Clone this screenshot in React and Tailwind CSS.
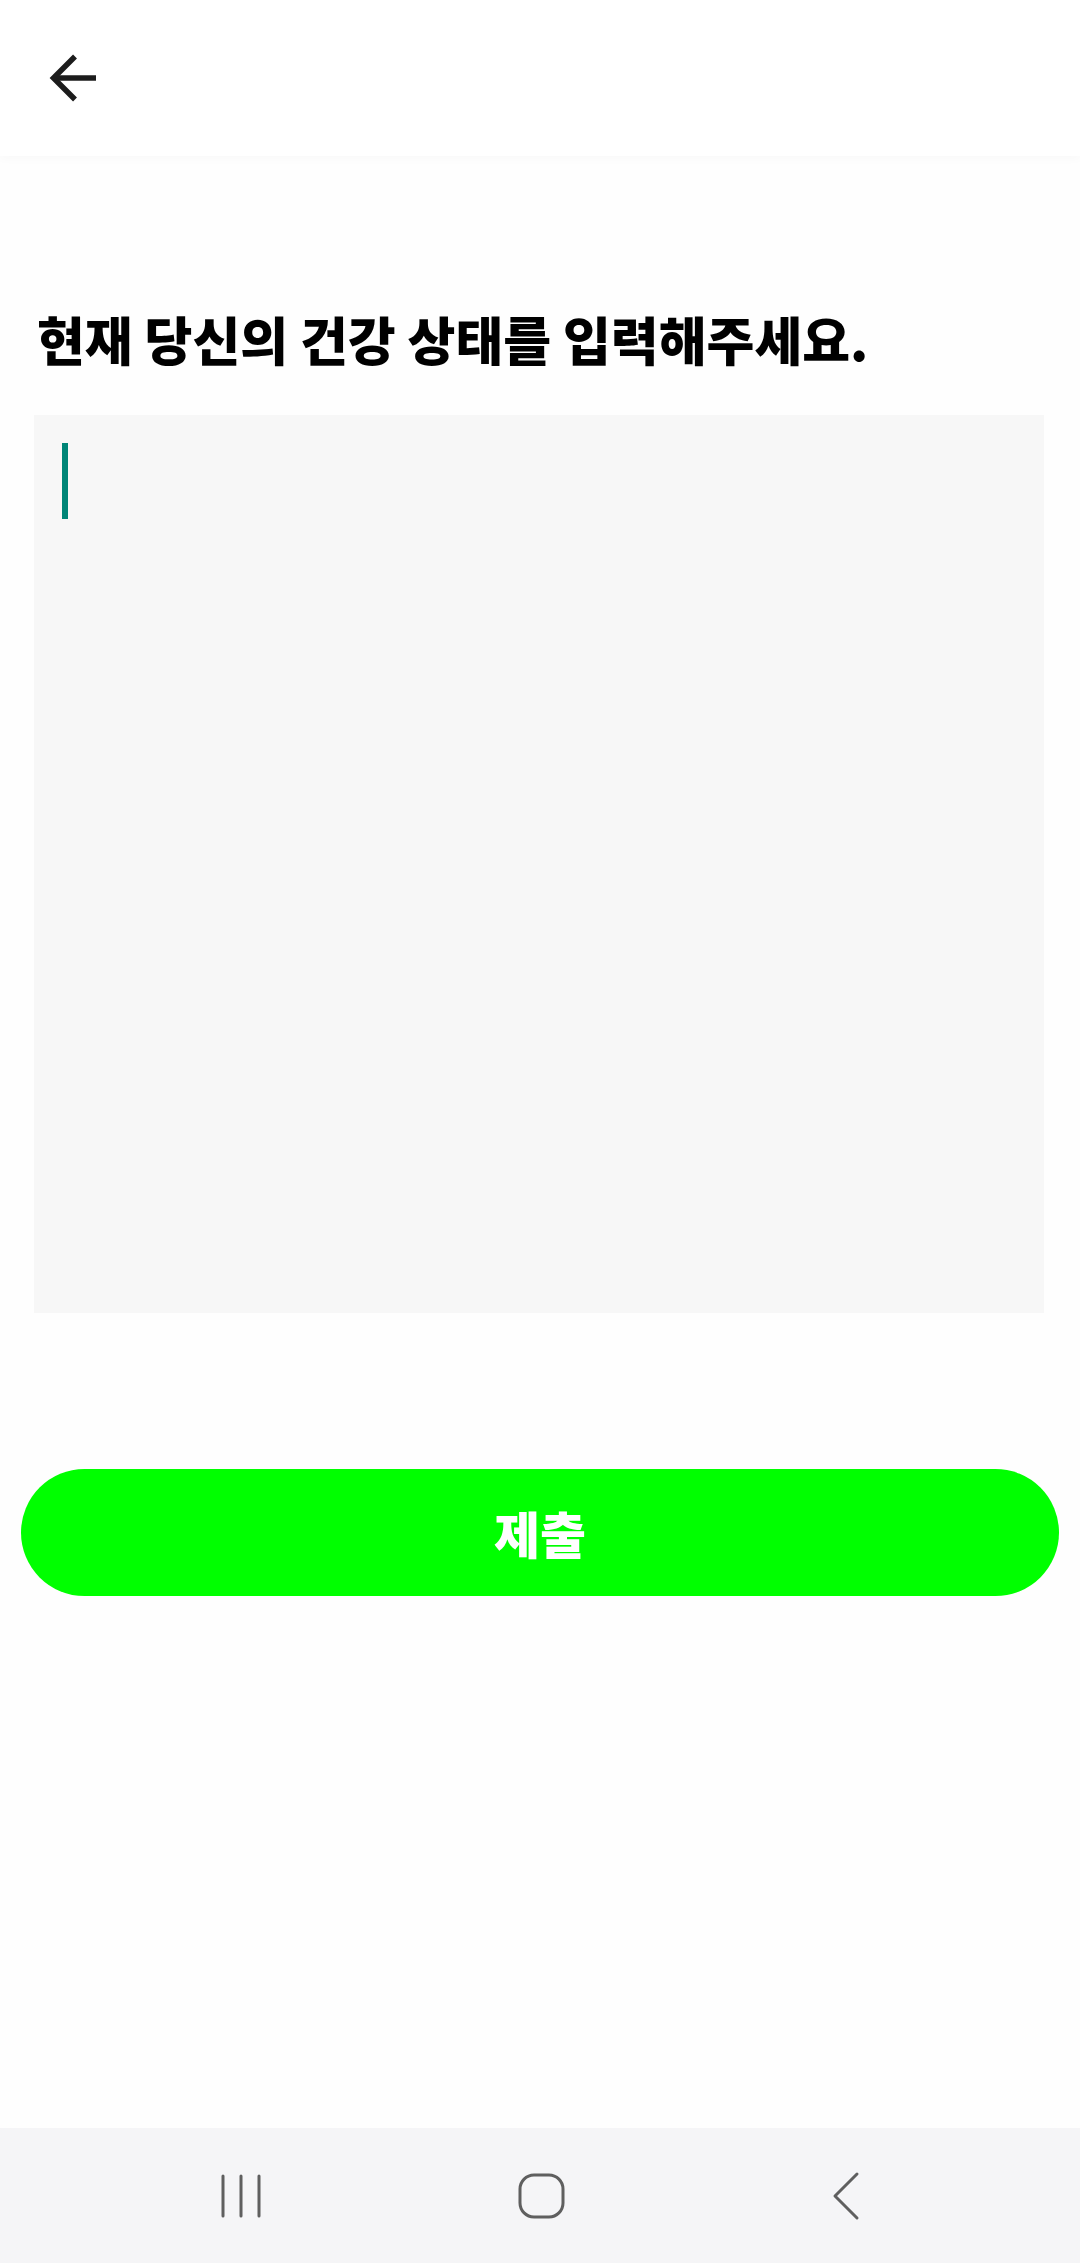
import React from 'react';

const font = { fontFamily: '"Noto Sans CJK KR", "Noto Sans", sans-serif' };

function BackArrow() {
  return (
    <svg width="60" height="60" viewBox="0 0 60 60" fill="none">
      <path d="M13 30H56" stroke="#1c1c1c" strokeWidth="5.5" />
      <path d="M35 8.5L13.5 30L35 51.5" stroke="#1c1c1c" strokeWidth="5.5" />
    </svg>
  );
}

function NavBar() {
  return (
    <div className="h-[135px] bg-[#f5f5f7] flex items-center pl-[220px]">
      {/* recents */}
      <svg width="42" height="46" viewBox="0 0 42 46" fill="none">
        <path d="M3 3V43M21 3V43M39 3V43" stroke="#5f5f5f" strokeWidth="3" strokeLinecap="round" />
      </svg>
      {/* home */}
      <svg width="47" height="46" viewBox="0 0 47 46" fill="none" className="ml-[256px]">
        <rect x="2" y="2" width="43" height="42" rx="14" stroke="#5f5f5f" strokeWidth="3" />
      </svg>
      {/* back */}
      <svg width="30" height="50" viewBox="0 0 30 50" fill="none" className="ml-[266px]">
        <path d="M26 3L4 25L26 47" stroke="#5f5f5f" strokeWidth="3" strokeLinecap="round" strokeLinejoin="round" />
      </svg>
    </div>
  );
}

export default function App() {
  return (
    <div className="w-[1080px] h-[2263px] bg-[#fefefe] flex flex-col" style={font}>
      {/* header */}
      <div className="h-[156px] bg-white flex items-center pl-[40px] shadow-[0_4px_8px_rgba(0,0,0,0.02)] relative z-10">
        <BackArrow />
      </div>

      <div className="flex-1 flex flex-col">
        <h1 className="mt-[151px] ml-[37px] text-[52px] leading-[64px] font-black text-black whitespace-nowrap">
          현재 당신의 건강 상태를 입력해주세요.
        </h1>

        <div className="mt-[44px] ml-[34px] mr-[36px] h-[898px] bg-[#f7f7f7] pt-[28px] pl-[28px]">
          <div className="w-[6px] h-[76px] bg-[#008577]" />
        </div>

        <button className="mt-[156px] mx-[21px] h-[127px] rounded-full bg-[#00ff00] text-white text-[50px] font-black">
          제출
        </button>
      </div>

      <NavBar />
    </div>
  );
}
